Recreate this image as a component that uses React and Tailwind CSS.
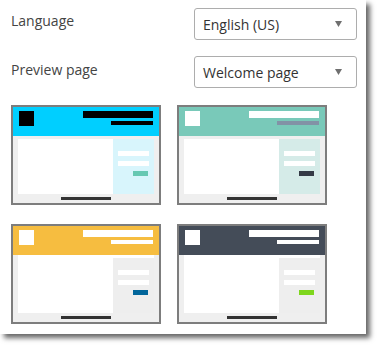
const cards = [
  { head: 'bg-[#00cfff]', logo: 'bg-black', bar1: 'bg-black', bar2: 'bg-black', side: 'bg-[#d8f5fc]', btn: 'bg-[#66c8b2]', flush: false },
  { head: 'bg-[#79c9b9]', logo: 'bg-white', bar1: 'bg-white', bar2: 'bg-[#8292a6]', side: 'bg-[#d5ebe8]', btn: 'bg-[#343a46]', flush: false },
  { head: 'bg-[#f6bd40]', logo: 'bg-white', bar1: 'bg-white', bar2: 'bg-white', side: 'bg-[#eeeeee]', btn: 'bg-[#02669b]', flush: true },
  { head: 'bg-[#444c58]', logo: 'bg-white', bar1: 'bg-white', bar2: 'bg-white', side: 'bg-[#eeeeee]', btn: 'bg-[#7ed61d]', flush: true },
];

function Thumb({ c }) {
  return (
    <div className="w-[150px] h-[100px] border-2 border-[#7d7d7d] bg-[#efefef] flex flex-col">
      <div className={`h-[29px] ${c.head} flex justify-between px-[6px] pt-[4px] shrink-0`}>
        <div className={`w-[15px] h-[15px] ${c.logo}`} />
        <div className="flex flex-col items-end gap-[3px]">
          <div className={`w-[70px] h-[7px] ${c.bar1}`} />
          <div className={`w-[42px] h-[4px] ${c.bar2}`} />
        </div>
      </div>
      <div className={`flex-1 flex px-[5px] ${c.flush ? 'pt-0' : 'pt-[3px]'}`}>
        <div className="w-[95px] bg-white" />
        <div className={`flex-1 ${c.flush ? 'bg-white pt-[3px]' : ''}`}>
          <div className={`h-full ${c.side} flex flex-col pl-[5px] pr-[5px] pt-[12px] gap-[5px]`}>
            <div className="h-[5px] bg-white" />
            <div className="h-[5px] bg-white" />
            <div className="flex justify-end pr-[1px]">
              <div className={`w-[15px] h-[5px] ${c.btn}`} />
            </div>
          </div>
        </div>
      </div>
      <div className="h-[9px] flex justify-center items-center shrink-0">
        <div className="w-[50px] h-[3px] bg-[#333333]" />
      </div>
    </div>
  );
}

function Select({ value }) {
  return (
    <div className="w-[163px] h-[32px] border border-[#adadad] rounded-[3px] bg-white flex items-center justify-between pl-2 pr-[14px]">
      <span className="text-[14px] text-[#333333]">{value}</span>
      <svg width="7" height="6" viewBox="0 0 7 6">
        <path d="M0 0 H7 L3.5 6 Z" fill="#6f6f6f" />
      </svg>
    </div>
  );
}

export default function App() {
  return (
    <div className="bg-white w-[381px] h-[350px]" style={{ fontFamily: '"Open Sans", "Liberation Sans", sans-serif' }}>
      <div className="w-[366px] h-[334px] bg-white shadow-[4px_4px_5px_rgba(0,0,0,0.6)] pl-[11px] pt-[8px]">
        <div className="flex">
          <div className="w-[183px] pt-[3px] text-[14px] leading-[20px] text-[#444444]">Language</div>
          <Select value="English (US)" />
        </div>
        <div className="flex mt-[16px]">
          <div className="w-[183px] pt-[4px] text-[14px] leading-[20px] text-[#444444]">Preview page</div>
          <Select value="Welcome page" />
        </div>
        <div className="grid grid-cols-[150px_150px] gap-x-[16px] gap-y-[19px] mt-[17px]">
          {cards.map((c, i) => (
            <Thumb key={i} c={c} />
          ))}
        </div>
      </div>
    </div>
  );
}
